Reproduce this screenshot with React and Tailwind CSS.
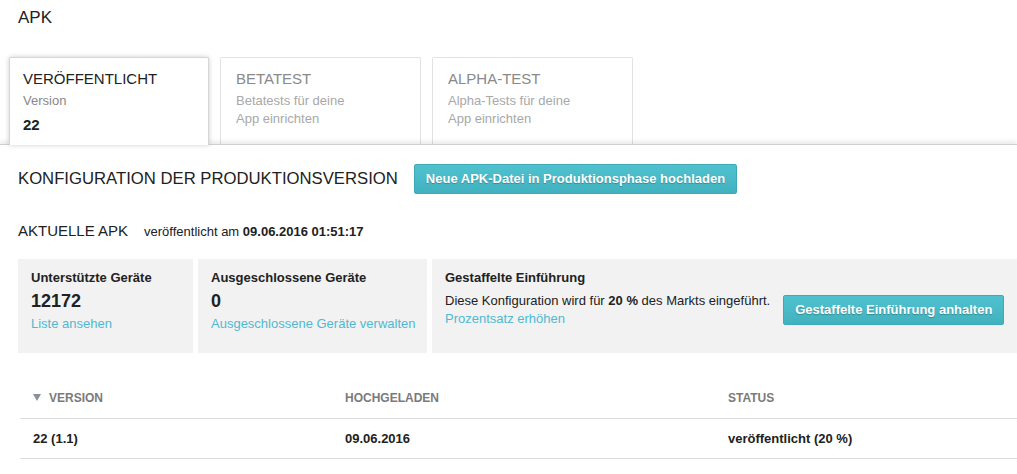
import React from 'react';

const tabs = [
  { title: 'BETATEST', lines: ['Betatests für deine', 'App einrichten'] },
  { title: 'ALPHA-TEST', lines: ['Alpha-Tests für deine', 'App einrichten'] },
];

function ActionButton({ children }) {
  return (
    <button className="h-[30px] shrink-0 rounded-[2px] border border-[#3eaab8] bg-gradient-to-b from-[#50c2cf] to-[#41b1be] px-[11px] text-[13px] font-bold text-white [text-shadow:0_1px_1px_rgba(0,0,0,0.25)] whitespace-nowrap">
      {children}
    </button>
  );
}

export default function App() {
  return (
    <div
      className="w-[1017px] h-[474px] overflow-hidden bg-white text-[#212121]"
      style={{ fontFamily: '"Liberation Sans", Arial, sans-serif' }}
    >
      <div className="pl-[18px] pt-[8px] text-[17px] leading-[20px]">APK</div>

      {/* tabs */}
      <div className="mt-[29px] flex gap-[11px] pl-[9px]">
        <div className="relative z-10 -mb-[1px] h-[88px] w-[200px] rounded-t-[2px] border border-b-0 border-[#d6d6d6] bg-white px-[13px] pt-[12px] shadow-[0_0_5px_rgba(0,0,0,0.2)]">
          <div className="text-[15px] leading-[18px] text-[#212121]">VERÖFFENTLICHT</div>
          <div className="mt-[4px] text-[13px] leading-[18px] text-[#888]">Version</div>
          <div className="mt-[5px] text-[15px] font-bold leading-[20px]">22</div>
        </div>
        {tabs.map((t) => (
          <div
            key={t.title}
            className="h-[87px] w-[201px] rounded-t-[2px] border border-b-0 border-[#e2e2e2] bg-white px-[15px] pt-[12px]"
          >
            <div className="text-[15px] leading-[18px] text-[#8a8a8a]">{t.title}</div>
            <div className="mt-[4px] text-[13px] leading-[18px] text-[#a8a8a8]">
              {t.lines.map((l) => (
                <div key={l}>{l}</div>
              ))}
            </div>
          </div>
        ))}
      </div>

      {/* panel */}
      <div className="relative border-t border-[#d0d0d0] pl-[18px] pt-[19px] shadow-[0_-3px_4px_rgba(0,0,0,0.08)]">
        <div className="flex items-center gap-[16px]">
          <div className="text-[16.7px] leading-[20px] text-[#212121]">KONFIGURATION DER PRODUKTIONSVERSION</div>
          <ActionButton>Neue APK-Datei in Produktionsphase hochladen</ActionButton>
        </div>

        <div className="mt-[28px] flex items-baseline gap-[16px] leading-[18px]">
          <span className="text-[15px]">AKTUELLE APK</span>
          <span className="text-[13px]">
            veröffentlicht am <b>09.06.2016 01:51:17</b>
          </span>
        </div>

        <div className="mt-[18px] flex h-[94px] gap-[5px]">
          <div className="w-[175px] shrink-0 bg-[#f2f2f2] px-[13px] pt-[10px]">
            <div className="text-[13px] font-bold leading-[18px]">Unterstützte Geräte</div>
            <div className="mt-[2px] text-[18px] font-bold leading-[24px]">12172</div>
            <div className="mt-[2px] text-[13px] leading-[18px] text-[#4fb9d1]">Liste ansehen</div>
          </div>
          <div className="w-[229px] shrink-0 bg-[#f2f2f2] px-[13px] pt-[10px]">
            <div className="text-[13px] font-bold leading-[18px]">Ausgeschlossene Geräte</div>
            <div className="mt-[2px] text-[18px] font-bold leading-[24px]">0</div>
            <div className="mt-[2px] whitespace-nowrap text-[13px] leading-[18px] text-[#4fb9d1]">Ausgeschlossene Geräte verwalten</div>
          </div>
          <div className="flex-1 bg-[#f2f2f2] pl-[13px] pt-[10px]">
            <div className="text-[13px] font-bold leading-[18px]">Gestaffelte Einführung</div>
            <div className="mt-[5px] flex items-center gap-[13px]">
              <div className="whitespace-nowrap text-[13px] leading-[18px]">
                <div>
                  Diese Konfiguration wird für <b>20 %</b> des Markts eingeführt.
                </div>
                <div className="text-[#4fb9d1]">Prozentsatz erhöhen</div>
              </div>
              <ActionButton>Gestaffelte Einführung anhalten</ActionButton>
            </div>
          </div>
        </div>

        {/* table */}
        <div className="ml-[2px] mt-[24px]">
          <div className="grid h-[42px] grid-cols-[312px_383px_1fr] items-center border-b border-[#dedede] text-[12px] font-bold text-[#7a7a7a]">
            <div className="flex items-center gap-[8px] pl-[13px]">
              <svg width="8" height="7" viewBox="0 0 8 7">
                <path d="M0 0h8L4 7z" fill="#8a8f99" />
              </svg>
              VERSION
            </div>
            <div className="pl-[13px]">HOCHGELADEN</div>
            <div className="pl-[13px]">STATUS</div>
          </div>
          <div className="grid h-[40px] grid-cols-[312px_383px_1fr] items-center border-b border-[#dedede] text-[13px] font-bold text-[#212121]">
            <div className="pl-[13px]">22 (1.1)</div>
            <div className="pl-[13px]">09.06.2016</div>
            <div className="pl-[13px]">veröffentlicht (20 %)</div>
          </div>
        </div>
      </div>
    </div>
  );
}
